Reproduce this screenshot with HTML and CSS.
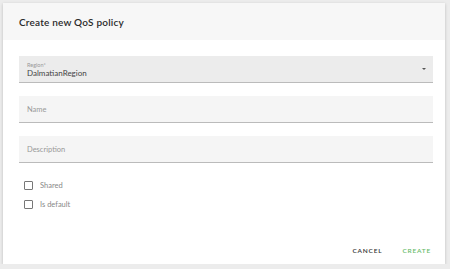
FILE: index.html
```html
<!DOCTYPE html>
<html lang="en">
<head>
  <meta charset="UTF-8" />
  <title>Create new QoS policy</title>
  <link rel="stylesheet" href="styles.css">
</head>
<body>
  <div class="dialog">
    <div class="dialog-title">Create new QoS policy</div>
    <div class="dialog-body">
      <div class="field select">
        <span class="field-label">Region*</span>
        <span class="field-value">DalmatianRegion</span>
        <span class="arrow"></span>
      </div>
      <div class="field">
        <span class="placeholder">Name</span>
      </div>
      <div class="field">
        <span class="placeholder">Description</span>
      </div>
      <label class="check"><span class="box"></span>Shared</label>
      <label class="check"><span class="box"></span>Is default</label>
    </div>
    <div class="dialog-actions">
      <button class="btn">CANCEL</button>
      <button class="btn primary">CREATE</button>
    </div>
  </div>
</body>
</html>
```

FILE: styles.css
```css
body {
  margin: 0;
  background: #ececec;
  font-family: "Lato", "Open Sans", sans-serif;
  color: #333;
}
.dialog {
  margin: 3px 0 0 3px;
  width: 442px;
  height: 261px;
  background: #fff;
  box-shadow: 0 1px 3px rgba(0, 0, 0, 0.2);
  display: flex;
  flex-direction: column;
}
.dialog-title {
  background: #f7f7f7;
  height: 37px;
  padding-left: 16px;
  display: flex;
  align-items: center;
  font-size: 10px;
  font-weight: 600;
  color: #2a2a2a;
  letter-spacing: 0.2px;
}
.dialog-body {
  padding: 16px 12px 0 16px;
  flex: 1;
}
.field {
  position: relative;
  height: 26px;
  background: #f5f5f5;
  border-bottom: 1px solid #bbb;
  padding: 0 8px;
  display: flex;
  flex-direction: column;
  justify-content: center;
  margin-bottom: 13px;
}
.field.select {
  background: #ececec;
}
.field-label {
  font-size: 5.5px;
  color: #999;
  margin-top: 1px;
}
.field-value {
  font-size: 8px;
  color: #444;
}
.placeholder {
  font-size: 7.5px;
  color: #999;
}
.arrow {
  position: absolute;
  right: 7px;
  top: 12px;
  border-left: 2.5px solid transparent;
  border-right: 2.5px solid transparent;
  border-top: 2.5px solid #555;
}
.check {
  display: flex;
  align-items: center;
  font-size: 7.5px;
  color: #888;
  height: 19px;
  padding-left: 5px;
}
.check:first-of-type {
  margin-top: 0;
}
.box {
  width: 7px;
  height: 7px;
  border: 1px solid #777;
  border-radius: 1px;
  margin-right: 7px;
}
.dialog-actions {
  display: flex;
  justify-content: flex-end;
  gap: 20px;
  padding: 0 14px 10px 0;
}
.btn {
  background: none;
  border: 0;
  padding: 0;
  font-family: inherit;
  font-size: 6.5px;
  font-weight: 600;
  letter-spacing: 0.8px;
  color: #333;
}
.btn.primary {
  color: #66bb6a;
}
```
